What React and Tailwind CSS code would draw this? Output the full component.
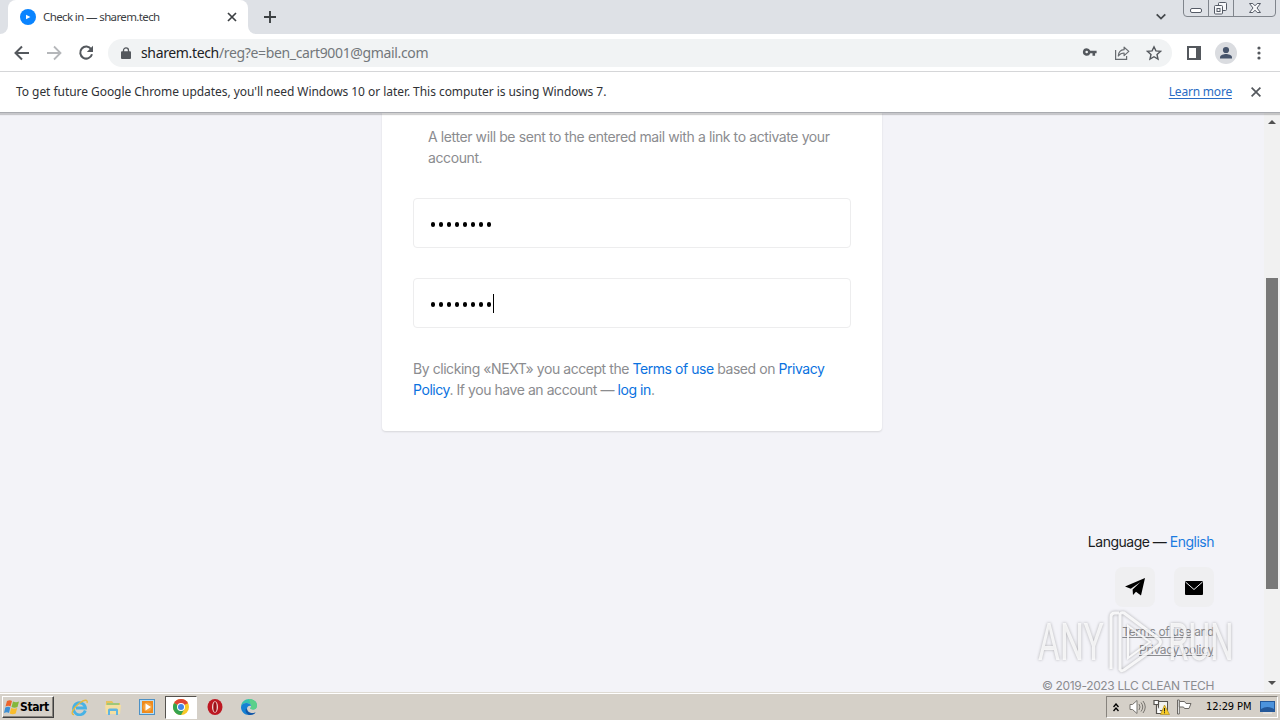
import React from "react";

const UI = "font-['Noto_Sans',sans-serif]";

function TabStrip() {
  return (
    <div className="flex h-[34px] shrink-0 bg-[#dee1e6]">
      <div className="flex w-2 items-end bg-white">
        <div className="h-full w-2 rounded-br-lg bg-[#dee1e6]" />
      </div>
      <div className="flex h-[34px] w-[240px] items-center rounded-t-lg bg-white pl-3 pr-[10px]">
        <svg className="h-4 w-4 shrink-0" viewBox="0 0 16 16">
          <circle cx="8" cy="8" r="8" fill="#0a84ff" />
          <path d="M6 5.8 10.4 8 6 10.2Z" fill="#fff" />
        </svg>
        <span className="ml-[7px] grow whitespace-nowrap text-[11.5px] leading-4 tracking-[-0.62px] text-[#3c4043]">Check in — sharem.tech</span>
        <svg className="h-3 w-3 shrink-0" viewBox="0 0 12 12" stroke="#3c4043" strokeWidth="1.7">
          <path d="m2 2 8 8M10 2 2 10" />
        </svg>
      </div>
      <div className="w-2 bg-white">
        <div className="h-full w-2 rounded-bl-lg bg-[#dee1e6]" />
      </div>
      <svg className="ml-2 mt-[11px] h-3 w-3" viewBox="0 0 12 12" stroke="#3c4043" strokeWidth="1.9">
        <path d="M6 0v12M0 6h12" />
      </svg>
      <div className="grow" />
      <svg className="mr-[17px] mt-[13px] h-2 w-[10px]" viewBox="0 0 10 8" fill="none" stroke="#45494d" strokeWidth="1.8">
        <path d="m.7 1.3 4.3 4.3 4.3-4.3" />
      </svg>
      <svg className="mr-1 h-[18px] w-[93px]" viewBox="0 0 93 18" fill="none" stroke="#80858c">
        <path d="M.5 0v13q0 3.500 3.500 3.500h85q3.500 0 3.500-3.500V0M25.500 0v16.500M50.500 0v16.500" />
        <rect x="7.500" y="8.500" width="11" height="4" rx="1.500" fill="#fff" stroke="#555b66" />
        <g stroke="#555b66" fill="#f7f8fa">
          <rect x="35.500" y="2.500" width="8" height="8" rx="1" />
          <rect x="31.500" y="5.500" width="8" height="8.500" rx="1" />
          <rect x="34" y="8.500" width="3" height="3" />
          <path d="M66.500 3.500h3.300l2.200 2.300 2.200-2.300h3.300l-3.500 4.500 3.500 4.500h-3.300L72 10.200l-2.200 2.300h-3.300L70 8Z" />
        </g>
      </svg>
    </div>
  );
}

function Toolbar() {
  return (
    <div className="flex h-[38px] shrink-0 items-center border-b border-[#d5d6d8] bg-white">
      <svg className="ml-[14px] h-4 w-4" viewBox="0 0 16 16" fill="none" stroke="#54585d" strokeWidth="2">
        <path d="M15 8H2M8 1.500 1.500 8 8 14.500" />
      </svg>
      <svg className="ml-4 h-4 w-4" viewBox="0 0 16 16" fill="none" stroke="#b5b7ba" strokeWidth="1.800">
        <path d="M1 8h13M8 1.500 14.500 8 8 14.500" />
      </svg>
      <svg className="ml-4 h-4 w-4" viewBox="0 0 16 16">
        <path d="M13.200 4.200A6 6 0 1 0 14 9.300" fill="none" stroke="#54585d" strokeWidth="2" />
        <path d="M15 .8V7H8.800Z" fill="#54585d" />
      </svg>
      <div className="ml-[14px] flex h-7 w-[1064px] items-center rounded-full bg-[#f1f3f4]">
        <svg className="ml-[13px] h-3 w-[10px]" viewBox="0 0 10 12">
          <path d="M2.500 5V3.400a2.500 2.500 0 0 1 5 0V5" fill="none" stroke="#54585d" strokeWidth="1.300" />
          <rect y="4.300" width="10" height="7.700" rx="1" fill="#54585d" />
        </svg>
        <span className="ml-[10px] grow whitespace-nowrap text-[14px] leading-5 tracking-[-0.35px] text-[#73777b]"><span className="text-[#202124]">sharem.tech</span>/reg?e=ben_cart9001@gmail.com</span>
        <svg className="h-4 w-4" viewBox="0 0 16 16">
          <path fillRule="evenodd" fill="#54585d" d="M4.700 3.200a3.800 3.800 0 1 0 3.600 5H10.500v2.600h2.600V8.200h1.500V5.700H8.300a3.800 3.800 0 0 0-3.600-2.500Zm0 2.500a1.300 1.300 0 1 1 0 2.600 1.300 1.300 0 0 1 0-2.600Z" />
        </svg>
        <svg className="ml-4 h-4 w-4" viewBox="0 0 16 16" fill="none" stroke="#686c70" strokeWidth="1.200">
          <path d="M1.600 5v9.400h11V11" />
          <path d="M4.300 11c.3-4 2.400-6.100 5.800-6.300V2.200l4.700 4.200-4.700 4.200V8C7.600 8 5.800 9 4.300 11Z" strokeLinejoin="round" />
        </svg>
        <svg className="ml-4 mr-[10px] h-4 w-4" viewBox="0 0 16 16" fill="none" stroke="#54585d" strokeWidth="1.400">
          <path d="m8 1.800 1.900 4.100 4.500.5L11 9.500l1 4.500-4-2.300L4 14l1-4.500L1.600 6.400l4.500-.5Z" />
        </svg>
      </div>
      <svg className="ml-[15px] h-[14px] w-[14px]" viewBox="0 0 14 14">
        <path fill="#54585d" fillRule="evenodd" d="M0 0h14v14H0ZM2 2v10h7V2Z" />
      </svg>
      <svg className="ml-[14px] h-[22px] w-[22px]" viewBox="0 0 22 22">
        <circle cx="11" cy="11" r="11" fill="#dadce0" />
        <circle cx="11" cy="8" r="3.100" fill="#46546b" />
        <path d="M5 16.500v-1.300c0-2.100 4-3.200 6-3.200s6 1.100 6 3.200v1.300Z" fill="#46546b" />
      </svg>
      <svg className="ml-5 h-[14px] w-1" viewBox="0 0 4 14" fill="#54585d">
        <circle cx="2" cy="2" r="1.600" /><circle cx="2" cy="7" r="1.600" /><circle cx="2" cy="12" r="1.600" />
      </svg>
    </div>
  );
}

function InfoBar() {
  return (
    <div className="z-10 flex h-[41px] shrink-0 items-center border-b border-[#a9abb0] bg-white pl-4 pr-[19px] text-[12px] shadow-[0_2px_1px_rgba(0,0,0,0.18)]">
      <span className="grow whitespace-nowrap tracking-[-0.05px] text-[#303236]">To get future Google Chrome updates, you'll need Windows 10 or later. This computer is using Windows 7.</span>
      <a className="tracking-[-0.2px] text-[#2a6cc4] underline underline-offset-2">Learn more</a>
      <svg className="ml-[19px] h-[10px] w-[10px]" viewBox="0 0 10 10" stroke="#54585d" strokeWidth="1.700">
        <path d="m.6.6 8.800 8.800M9.400.6.600 9.400" />
      </svg>
    </div>
  );
}

function PasswordField({ focused }) {
  return (
    <div className="flex h-[50px] items-center rounded border border-[#ededee] pl-[17px]">
      <div className="flex items-center gap-1 pt-[3px]">
        {Array.from({ length: 8 }, (_, i) => (
          <span key={i} className="h-[5px] w-1 rounded-full bg-black" />
        ))}
      </div>
      {focused && <span className="ml-[2px] h-[19px] w-px bg-black" />}
    </div>
  );
}

function Page() {
  return (
    <div className="flex h-[579px] shrink-0 overflow-hidden bg-[#f3f3f8] font-['Inter',sans-serif]">
      <div className="relative flex w-[1264px] flex-col items-center">
        <main className="h-[318px] w-[500px] shrink-0 rounded-b bg-white px-[31px] pt-[13px] text-[14px] leading-[21px] text-[#8b8c8f] shadow-[0_1px_2px_rgba(0,0,0,0.12)]">
          <p className="ml-[15px] whitespace-nowrap tracking-[-0.4px]">A letter will be sent to the entered mail with a link to activate your<br />account.</p>
          <div className="mt-[30px] flex flex-col gap-[30px]">
            <PasswordField />
            <PasswordField focused />
          </div>
          <p className="mt-[30px] whitespace-nowrap tracking-[-0.44px]">By clicking «NEXT» you accept the <a className="text-[#0a72e0]">Terms of use</a> based on <a className="text-[#0a72e0]">Privacy<br />Policy</a>. If you have an account — <a className="text-[#0a72e0]">log in</a>.</p>
        </main>
        <footer className="mr-[50px] mt-[100px] flex flex-col items-end self-end text-right">
          <div className="whitespace-nowrap text-[14px] leading-[21px] tracking-[-0.5px] text-[#1a1b1e]">Language — <a className="text-[#1b7be0]">English</a></div>
          <div className="mt-[15px] flex gap-[19px]">
            <span className="flex h-10 w-10 items-center justify-center rounded-lg bg-[#efeff1]">
              <svg className="h-[18px] w-5" viewBox="0 0 20 18"><path d="M20 0 0 8.500l5.800 2.300L15.500 4 7.600 11.600 8 17l3-3.300 5 3.800Z" /></svg>
            </span>
            <span className="flex h-10 w-10 items-center justify-center rounded-lg bg-[#efeff1]">
              <svg className="mt-px h-[14px] w-[18px]" viewBox="0 0 18 14"><rect width="18" height="14" rx="1" /><path d="m.5 1 8.500 7.500L17.500 1" fill="none" stroke="#efeff1" /></svg>
            </span>
          </div>
          <div className="mt-4 whitespace-nowrap text-[12px] leading-[18px] tracking-[-0.44px] text-[#8b8c90]"><a className="underline">Terms of use</a> and<br /><a className="tracking-[-0.3px] underline">Privacy policy</a></div>
          <div className="mt-[18px] whitespace-nowrap text-[12px] leading-[18px] tracking-[-0.35px] text-[#8b8c90]">© 2019-2023 LLC CLEAN TECH</div>
        </footer>
        <div className="absolute left-[1038px] top-[496px] flex h-[66px] w-[200px] items-center font-['Roboto',sans-serif] text-[51px] leading-none text-white/80 [filter:drop-shadow(0_0_1.5px_rgba(0,0,0,0.35))]">
          <span className="w-[68px]"><span className="inline-block origin-left scale-x-[0.66]">ANY</span></span>
          <svg className="h-[66px] w-[62px] shrink-0" viewBox="0 0 62 66" fill="none" stroke="#fff" strokeOpacity=".85" strokeWidth="3">
            <path d="M5 60V8q0-4 4-4h4M14 61V6q0-3 4-2l35 26q3 3 0 6L18 61q-4 2-4-2" />
            <path d="M22 17v32l22-16Z" strokeWidth="2" />
          </svg>
          <span className="w-[68px]"><span className="inline-block origin-left scale-x-[0.65]">RUN</span></span>
        </div>
      </div>
      <div className="flex w-4 flex-col items-center bg-[#f1f1f1]">
        <svg className="mt-[7px] h-1 w-2" viewBox="0 0 8 4" fill="#505050"><path d="M0 4 4 0l4 4Z" /></svg>
        <div className="mt-[154px] h-[311px] w-3 bg-[#787878]" />
        <svg className="mt-[92px] h-1 w-2" viewBox="0 0 8 4" fill="#505050"><path d="M0 0h8L4 4Z" /></svg>
      </div>
    </div>
  );
}

function Taskbar() {
  return (
    <div className="flex h-[28px] shrink-0 items-center border-t border-[#dedad3] bg-[#d5d0c8] pt-px shadow-[inset_0_1px_#fff] font-['DejaVu_Sans_Condensed','DejaVu_Sans',sans-serif] text-[11px] text-black">
      <div className="ml-0.5 flex h-[22px] w-[52px] items-center border border-b-[#404040] border-l-white border-r-[#404040] border-t-white pl-px shadow-[inset_-1px_-1px_#87837d]">
        <svg className="h-4 w-4 shrink-0" viewBox="0 0 16 16">
          <path d="M3 2q3-1.500 5 0L6.500 7.500q-2-1.500-5 0Z" fill="#ed642b" />
          <path d="M9 2.500q3 1.500 6 0L13.500 8q-3 1.500-6 0Z" fill="#84b73c" />
          <path d="M1.300 8.500q3-1.500 5 0L5 14q-2-1.500-5 0Z" fill="#3d8fd4" />
          <path d="M7.200 9q3 1.500 6 0l-1.500 5.500q-3 1.500-6 0Z" fill="#f9bd2d" />
        </svg>
        <span className="whitespace-nowrap text-[12px] font-bold tracking-[-0.4px]">Start</span>
      </div>
      <svg className="ml-[17px] h-[17px] w-[17px]" viewBox="0 0 17 17" fill="none">
        <path d="M14.300 11.500A6 6 0 1 1 14.500 9H5" stroke="#48b2e5" strokeWidth="2.800" />
        <path d="M3 15.500C-1 16 2 9 8 4.500s9-4 8-.5" stroke="#e6b93c" strokeWidth="1.300" />
      </svg>
      <svg className="ml-[17px] h-[17px] w-[16px]" viewBox="0 0 16 17">
        <path d="M1 2h6l1.500 2H15v10H1Z" fill="#e7c35c" /><path d="M2 4h12v6H2Z" fill="#9fc77a" />
        <path d="M0 6h16l-1 9H1Z" fill="#f5dfa0" /><path d="M3 16v-5q0-1.500 1.500-1.500h7q1.500 0 1.500 1.500v5h-2v-4H5v4Z" fill="#61b5e1" />
      </svg>
      <svg className="ml-[18px] h-4 w-4" viewBox="0 0 16 16">
        <rect x=".5" y=".5" width="15" height="15" fill="#b9def4" stroke="#4d91c5" />
        <rect x="3" y="2" width="11" height="12" fill="#ef8a1c" /><circle cx="8.500" cy="8" r="4.500" fill="#f6a33c" /><path d="M6.500 4.500 12 8l-5.500 3.500Z" fill="#fff" />
      </svg>
      <div className="ml-[10px] flex h-[23px] w-[32px] items-center justify-center border border-b-white border-l-[#55524e] border-r-white border-t-[#55524e] bg-white">
        <svg className="h-4 w-4" viewBox="0 0 16 16">
          <circle cx="8" cy="8" r="8" fill="#f8c829" />
          <path d="M8 8 1.070 4A8 8 0 0 1 14.930 4Z" fill="#df4435" />
          <path d="M1.070 4A8 8 0 0 0 8 16l3.400-6L8 8Z" fill="#35a34f" />
          <path d="M1.070 4h13.860L15 4.300H8Z" fill="#df4435" />
          <circle cx="8" cy="8" r="4" fill="#fff" /><circle cx="8" cy="8" r="3" fill="#4285e8" />
        </svg>
      </div>
      <svg className="ml-[10px] h-4 w-4" viewBox="0 0 16 16"><ellipse cx="8" cy="8" rx="7.500" ry="8" fill="#bd1822" /><ellipse cx="8" cy="8" rx="3" ry="5.800" fill="#f2d8d5" /><ellipse cx="8" cy="8" rx="1.700" ry="5" fill="#9d1019" /></svg>
      <svg className="ml-[18px] h-4 w-4" viewBox="0 0 16 16">
        <path d="M0 8C0 3 4 0 8 0c5 0 8 3.200 8 6.500 0 2.700-2 4-4 4-1.700 0-2.700-.6-2.700-1.200 0-.5.900-.8.900-2C10 5.300 8 4 5.500 4 2.500 4 .5 6 0 8Z" fill="#36c2b0" />
        <path d="M8 0c5 0 8 3.200 8 6.500 0 2.700-2 4-4 4-1.700 0-2.700-.6-2.700-1.200 0-.5.900-.8.900-2Z" fill="#5bd08a" />
        <path d="M0 8c.5-2.500 2.500-4 5.500-4C8 4 10 5.300 10.200 7.300 9 6.300 6 7 6 9.800c0 3 3 4.700 5.500 4.700 1.500 0 2.500-.5 3.200-1C13 15 10.500 16 8 16c-4.500 0-8-3.500-8-8Z" fill="#1481d4" />
        <path d="M6 9.800c0 3 3 4.200 5.500 4.200 1.500 0 2.500-.2 3.200-.5C12.500 16 9.500 16.300 7.500 15.700 4.500 14.500 3.500 9.500 6 9.800Z" fill="#1356a6" />
      </svg>
      <div className="grow" />
      <div className="mr-0.5 flex h-[22px] w-[172px] items-center border border-b-white border-l-[#87837d] border-r-white border-t-[#87837d]">
        <svg className="ml-[6px] h-[9px] w-[6px]" viewBox="0 0 6 9" fill="none" stroke="#000" strokeWidth="1.400"><path d="m.5 4 2.500-3 2.500 3M.5 8l2.500-3 2.500 3" /></svg>
        <svg className="ml-[10px] h-4 w-[17px]" viewBox="0 0 17 16" fill="#fff" stroke="#77746f"><path d="M1 5.500h2.500L8 1.500v13l-4.500-4H1Z" /><path d="M10 5q2 3 0 6M12 3.500q3.500 4.500 0 9M14 2q4.500 6 0 12" fill="none" /></svg>
        <svg className="ml-[7px] h-4 w-[17px]" viewBox="0 0 17 16"><rect x="5.500" y="2.500" width="9" height="9" fill="#f2f2ee" stroke="#56534f" /><path d="M1 1.500h4.500v4H1ZM3.500 5.500v9h5" fill="#fff" stroke="#56534f" strokeWidth="1.200" /><path d="m11.500 6 5 9.500h-9Z" fill="#f7cb26" stroke="#a88412" strokeWidth=".6" /><path d="M11 9h1v3.500h-1zM11 13.300h1v1h-1z" fill="#222" /></svg>
        <svg className="ml-[6px] h-4 w-4" viewBox="0 0 16 16" fill="#fff" stroke="#6b6864"><path d="M1.500 1v14h1.800V1Z" /><path d="M3.300 2.500h5.200l1.500 2h5l-2 5H8.500l-1-1.500H3.300Z" /></svg>
        <span className="ml-[14px] grow whitespace-nowrap tracking-[-0.1px]">12:29 PM</span>
        <svg className="mr-0.5 h-[14px] w-[15px]" viewBox="0 0 15 14"><rect y="1" width="15" height="11" fill="#245899" /><path d="M1 2h13v7Q7 5 1 9Z" fill="#4c93dc" /><path d="M3 13h9" stroke="#eee" /></svg>
      </div>
    </div>
  );
}

export default function App() {
  return (
    <div className={`flex h-[720px] w-[1280px] flex-col overflow-hidden bg-white ${UI}`}>
      <TabStrip />
      <Toolbar />
      <InfoBar />
      <Page />
      <Taskbar />
    </div>
  );
}
